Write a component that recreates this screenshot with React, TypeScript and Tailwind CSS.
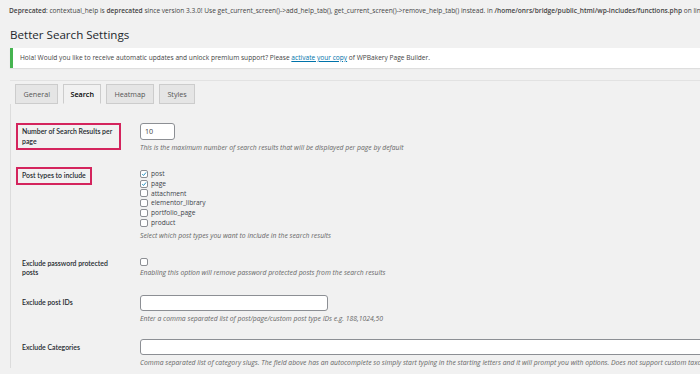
import React from "react";

const postTypes = [
  { name: "post", checked: true },
  { name: "page", checked: true },
  { name: "attachment", checked: false },
  { name: "elementor_library", checked: false },
  { name: "portfolio_page", checked: false },
  { name: "product", checked: false },
];

export default function App() {
  return (
    <div className="w-[700px] h-[374px] overflow-hidden bg-[#f1f1f1] text-[#444] font-['Open_Sans','Noto_Sans',sans-serif]">
      {/* Aviso PHP */}
      <p className="pl-[9px] pt-[6px] h-[17px] whitespace-nowrap text-[6.6px] leading-[9px]">
        <b className="font-semibold">Deprecated</b>: contextual_help is <b className="font-semibold">deprecated</b> since version 3.3.0! Use get_current_screen()-&gt;add_help_tab(), get_current_screen()-&gt;remove_help_tab() instead. in <b className="font-semibold">/home/onrs/bridge/public_html/wp-includes/functions.php</b> on line 4773
      </p>

      <h1 className="pl-[10px] text-[11.6px] leading-[20px] text-[#23282d] h-[23px] pt-[8px] box-content">
        Better Search Settings
      </h1>

      {/* Notice */}
      <div className="ml-[10px] h-[20px] bg-white border-l-[3px] border-[#46b450] shadow-[0_1px_1px_rgba(0,0,0,0.08)] flex items-center pl-[7px] text-[6.6px] whitespace-nowrap">
        Hola! Would you like to receive automatic updates and unlock premium support? Please&nbsp;
        <span className="text-[#0073aa] underline">activate your copy</span>&nbsp;of WPBakery Page Builder.
      </div>

      <div className="ml-[10px] mt-[12px] border-t border-[#e2e2e2]" />

      {/* Tabs */}
      <div className="ml-[10px] mt-[3px] flex gap-[5px] pl-[5px] text-[7.2px]">
        <Tab>General</Tab>
        <Tab active>Search</Tab>
        <Tab>Heatmap</Tab>
        <Tab>Styles</Tab>
      </div>

      {/* Formulario */}
      <div className="ml-[10px] border-l border-[#dcdcdc] pt-[19px] pl-[5px]">
        <Row label="Number of Search Results per page" highlight boxWidth="w-[105px]">
          <div className="w-[35px] h-[17px] bg-white border border-[#8c8f94] rounded-[3px] text-[7.2px] flex items-center pl-[4px]">
            10
          </div>
          <Desc className="mt-[3px]">
            This is the maximum number of search results that will be displayed per page by default
          </Desc>
        </Row>

        <Row label="Post types to include" highlight boxWidth="w-fit" className="mt-[14px]">
          <div className="pt-[2px] flex flex-col">
            {postTypes.map((p) => (
              <label key={p.name} className="flex items-center gap-[3px] h-[9.8px] text-[6.6px] text-[#3c434a]">
                <Checkbox checked={p.checked} />
                {p.name}
              </label>
            ))}
          </div>
          <Desc className="mt-[3px]">Select which post types you want to include in the search results</Desc>
        </Row>

        <Row label="Exclude password protected posts" boxWidth="w-[105px]" className="mt-[14px]">
          <div className="pt-[3px]">
            <Checkbox />
          </div>
          <Desc className="mt-[2px]">Enabling this option will remove password protected posts from the search results</Desc>
        </Row>

        <Row label="Exclude post IDs" boxWidth="w-[105px]" className="mt-[12px]">
          <div className="pt-[1px]">
            <div className="w-[188px] h-[16px] bg-white border border-[#8c8f94] rounded-[3px]" />
          </div>
          <Desc className="mt-[3px]">Enter a comma separated list of post/page/custom post type IDs e.g. 188,1024,50</Desc>
        </Row>

        <Row label="Exclude Categories" boxWidth="w-[105px]" className="mt-[15px]">
          <div className="w-[600px] h-[16px] bg-white border border-[#8c8f94] rounded-[3px]" />
          <Desc className="mt-[3px] whitespace-nowrap">
            Comma separated list of category slugs. The field above has an autocomplete so simply start typing in the starting letters and it will prompt you with options. Does not support custom taxonomies.
          </Desc>
        </Row>
      </div>
    </div>
  );
}

function Tab({ children, active = false }: { children: React.ReactNode; active?: boolean }) {
  return (
    <div
      className={`h-[20px] flex items-center border border-[#ccc] ${
        active
          ? "px-[6px] bg-[#f1f1f1] text-[#000] font-semibold border-b-[#f1f1f1]"
          : "px-[7.5px] bg-[#e5e5e5] text-[#555]"
      }`}
    >
      {children}
    </div>
  );
}

function Row({
  label,
  highlight = false,
  boxWidth,
  className = "",
  children,
}: {
  label: string;
  highlight?: boolean;
  boxWidth: string;
  className?: string;
  children: React.ReactNode;
}) {
  return (
    <div className={`flex ${className}`}>
      <div className="w-[124px] shrink-0">
        <div
          className={`${boxWidth} font-['Lato',sans-serif] text-[6.9px] leading-[9.5px] font-semibold text-[#23282d] px-[4px] py-[2px] border-2 ${
            highlight ? "border-[#d4245d]" : "border-transparent"
          }`}
        >
          {label}
        </div>
      </div>
      <div className="flex-1 min-w-0">{children}</div>
    </div>
  );
}

function Desc({ children, className = "" }: { children: React.ReactNode; className?: string }) {
  return <p className={`text-[6.8px] italic text-[#666] leading-[10px] ${className}`}>{children}</p>;
}

function Checkbox({ checked = false }: { checked?: boolean }) {
  return (
    <span className="w-[8px] h-[8px] bg-white border border-[#8c8f94] rounded-[2px] flex items-center justify-center shrink-0">
      {checked && (
        <svg viewBox="0 0 10 10" className="w-[8px] h-[8px]">
          <path d="M2 5.2 L4.2 7.4 L8.4 2.4" fill="none" stroke="#1e8cbe" strokeWidth="1.6" />
        </svg>
      )}
    </span>
  );
}
